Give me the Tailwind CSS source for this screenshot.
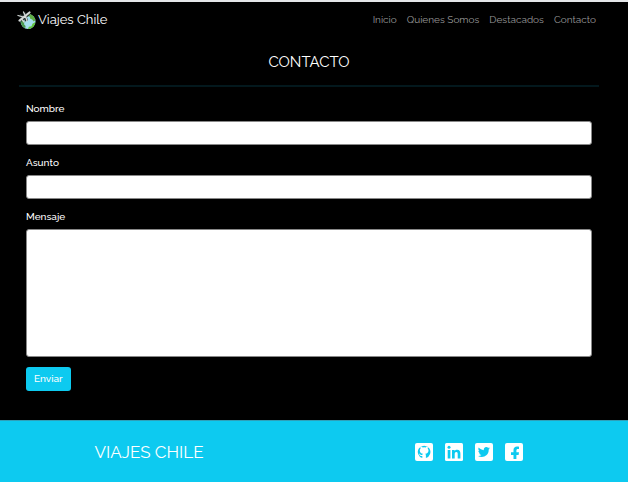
<!DOCTYPE html>
<html lang="es">
<head>
<meta charset="utf-8">
<meta name="viewport" content="width=device-width, initial-scale=1">
<title>Viajes Chile - Contacto</title>
<script src="https://cdn.jsdelivr.net/npm/@tailwindcss/browser@4"></script>
</head>
<body class="flex min-h-screen flex-col border-t-2 border-[#e4e6e8] bg-black font-[Raleway,Lato,sans-serif] text-[10px] leading-4 text-white">
<header>
  <nav class="flex h-9 items-center justify-between pr-8 pl-4" aria-label="Principal">
    <a href="#" class="flex items-center gap-0.5 text-[13px] leading-5">
      <svg class="size-5" viewBox="0 0 20 20" aria-hidden="true">
        <circle cx="12" cy="11.5" r="7.5" fill="#a5dfee"/>
        <path d="M11 4.200c4-.8 7.800 2 8.400 6l-1.800 1.300-1.400-2-2-.8-.4-2-2.400-.6z" fill="#5fae45"/>
        <path d="M19.400 12c-.3 4-3.400 7-7.500 7l1-2.200 2.600-.6 1-2.400z" fill="#62c440"/>
        <path d="M5 9l2 .6 1.500 2.200-.5 2.400 1.600 1.800-.4 2.200C6 16.800 4.200 13.400 5 9z" fill="#4b9a50"/>
        <path d="M4.500 10.500L13 3.500M3.500 5.500l5 2M8 3l2 4M9.500 8l1 3" fill="none" stroke="#26302f" stroke-width="3.200"/>
        <path d="M3.500 10.500L13.500 2.500" fill="none" stroke="#d5d9d8" stroke-width="2.200" stroke-linecap="round"/>
        <path d="M2 5.500l7 2M7.500 2l2.500 5M10 7.500l1 3.500M6 9.500l2 2.500" fill="none" stroke="#d5d9d8" stroke-width="1.300" stroke-linecap="round"/>
      </svg>
      <span>Viajes Chile</span>
    </a>
    <div class="flex items-center gap-2.5 text-[#999]">
      <a href="#">Inicio</a>
      <a href="#">Quienes Somos</a>
      <a href="#">Destacados</a>
      <a href="#">Contacto</a>
    </div>
  </nav>
</header>
<main class="flex-1 pr-[29px] pb-7 pl-[19px]">
  <h1 class="pt-3 pb-[11px] text-center text-[15px] leading-6">CONTACTO</h1>
  <hr class="border-t-2 border-[#03181d]">
  <form class="px-[7px] pt-3.5 font-medium">
    <label for="nombre" class="mb-1 block h-4">Nombre</label>
    <input id="nombre" type="text" class="mb-2.5 block h-6 w-full rounded-[3px] border border-[#888] bg-white px-2 text-black">
    <label for="asunto" class="mb-1 block h-4">Asunto</label>
    <input id="asunto" type="text" class="mb-2.5 block h-6 w-full rounded-[3px] border border-[#888] bg-white px-2 text-black">
    <label for="mensaje" class="mb-1 block h-4">Mensaje</label>
    <textarea id="mensaje" class="mb-2.5 block h-32 w-full resize-none rounded-[3px] border border-[#888] bg-white px-2 py-1 text-black"></textarea>
    <button type="button" class="h-6 rounded-[3px] bg-[#0dcaf0] px-2">Enviar</button>
  </form>
</main>
<footer class="grid h-[62px] grid-cols-2 items-center border-t border-[#2f9fb8] bg-[#0dcaf0]">
  <p class="pr-4 text-center text-[17px] leading-6">VIAJES CHILE</p>
  <div class="flex justify-center gap-3 pr-1">
    <a href="#" aria-label="GitHub"><svg class="size-[18px]" viewBox="0 0 18 18"><rect width="18" height="18" rx="2" fill="#fff"/><path d="M7.300 15v-2.100c-2 .4-2.600-.8-2.900-1.500-.2-.4-.5-.7-.8-.9 1.500-.2 1.500 1.600 2.700 1.600.5 0 .9-.1 1.100-.3.100-.5.300-.8.600-1-2-.3-3.200-1.200-3.200-3.300 0-.8.300-1.500.8-2-.2-.7-.1-1.400.1-1.900.8 0 1.500.4 2 .8a6 6 0 0 1 2.900 0c.5-.4 1.200-.8 2-.8.2.5.300 1.200.1 1.900.5.5.8 1.200.8 2 0 2.100-1.200 3-3.200 3.300.4.300.6.900.6 1.600V15A6.300 6.300 0 1 0 7.300 15z" fill="#0dcaf0"/></svg></a>
    <a href="#" aria-label="LinkedIn"><svg class="size-[18px]" viewBox="0 0 18 18"><rect width="18" height="18" rx="1.500" fill="#fff"/><circle cx="4" cy="4.200" r="1.500" fill="#0dcaf0"/><path d="M2.700 6.900h2.700v8.500H2.700zM7 6.900h2.600v1.200c.5-.9 1.400-1.400 2.500-1.400 2.700 0 3.300 1.700 3.300 4v4.700h-2.700v-4.200c0-1 0-2.200-1.400-2.200s-1.600 1.100-1.600 2.200v4.200H7z" fill="#0dcaf0"/></svg></a>
    <a href="#" aria-label="Twitter"><svg class="size-[18px]" viewBox="0 0 18 18"><rect width="18" height="18" rx="2" fill="#fff"/><path d="M15 5.300a5 5 0 0 1-1.300 1.300c.2 4.700-3.300 7.500-7 7.500-1.400 0-2.600-.4-3.700-1.100 1.300.1 2.500-.3 3.500-1-1.100-.1-2-.8-2.300-1.800h1.100c-1.200-.3-2-1.300-2-2.500.3.200.7.300 1.100.300-1.100-.8-1.400-2.200-.7-3.400 1.300 1.500 3.100 2.500 5.100 2.600-.4-1.700.9-3.200 2.500-3.200.7 0 1.300.3 1.800.8.600-.1 1.100-.3 1.600-.6-.2.600-.6 1.100-1.100 1.400.5-.1 1-.2 1.400-.3z" fill="#0dcaf0"/></svg></a>
    <a href="#" aria-label="Facebook"><svg class="size-[18px]" viewBox="0 0 18 18"><rect width="18" height="18" rx="2" fill="#fff"/><path d="M8.500 16v-4.100H6V9.200h2.500V7.100c0-2.300 1.400-3.600 3.500-3.600 1 0 2 .2 2 .2V6h-1.100c-1.200 0-1.500.7-1.500 1.400v1.800H14l-.4 2.700h-2.200V16z" fill="#0dcaf0"/></svg></a>
  </div>
</footer>
</body>
</html>
